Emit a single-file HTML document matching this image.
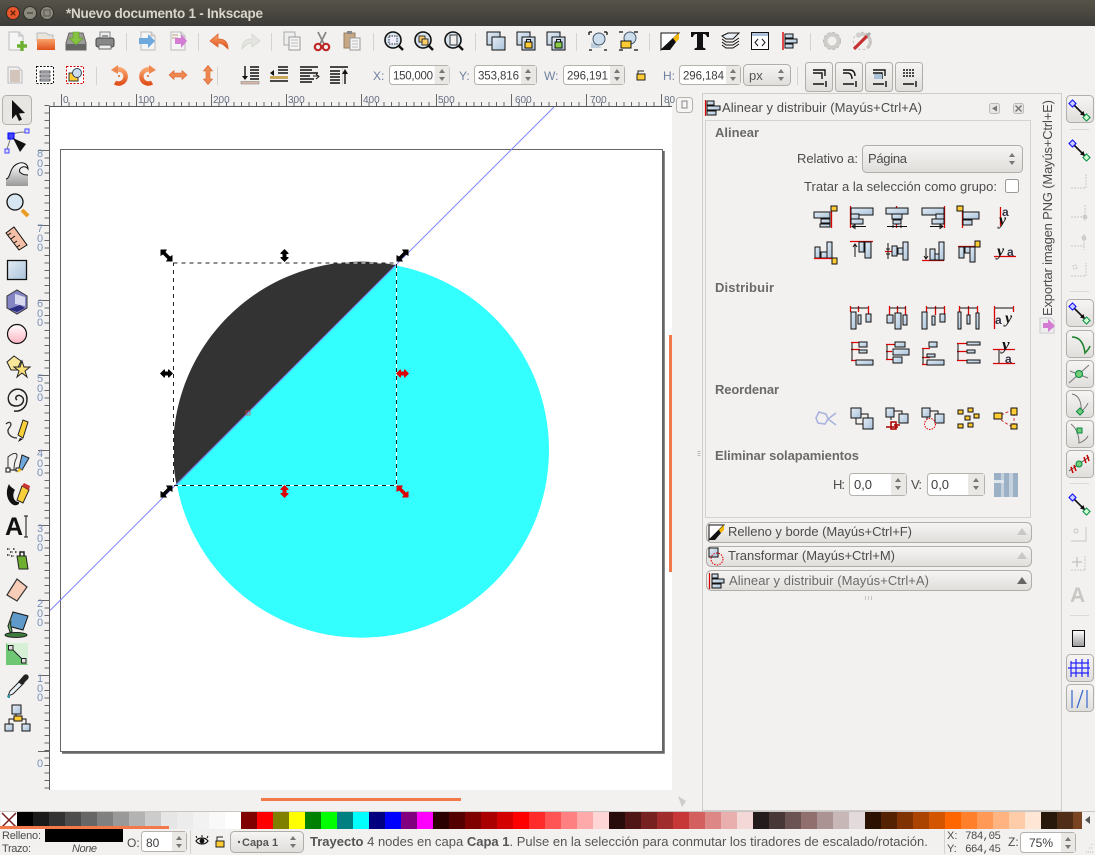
<!DOCTYPE html>
<html><head><meta charset="utf-8"><title>Inkscape</title>
<style>
html,body{margin:0;padding:0;background:#f2f1f0;width:1095px;height:855px;overflow:hidden}
svg{display:block}
text{font-family:"Liberation Sans",sans-serif;font-size:13px;fill:#4c4c4c}
.b{fill:url(#bl);stroke:#111;stroke-width:1}
.r{stroke:#d00;stroke-width:1.3;fill:none}
.k{stroke:#111;stroke-width:1;fill:none}
.y{fill:#fc3;stroke:#111;stroke-width:1}
.box{fill:#fff;stroke:#b5b2ad;stroke-width:1}
.sep{stroke:#d5d3cf;stroke-width:1}
.lab{fill:#6a6a6a;font-weight:bold}
.rl{font-size:11px;fill:#7a90b8}
.tb{font-size:10px;fill:#666f80}
.btn{fill:url(#btn);stroke:#b0aea9;stroke-width:1}
.num{fill:#3c3c3c;font-size:11.5px}
</style></head><body>
<svg width="1095" height="855" viewBox="0 0 1095 855" xmlns="http://www.w3.org/2000/svg">
<defs>
<linearGradient id="title" x1="0" y1="0" x2="0" y2="1"><stop offset="0" stop-color="#575349"/><stop offset="1" stop-color="#3c3b37"/></linearGradient>
<linearGradient id="bl" x1="0" y1="0" x2="1" y2="1"><stop offset="0" stop-color="#e4edf5"/><stop offset="1" stop-color="#a9c2da"/></linearGradient>
<linearGradient id="btn" x1="0" y1="0" x2="0" y2="1"><stop offset="0" stop-color="#f6f5f4"/><stop offset="1" stop-color="#e0dedb"/></linearGradient>
<linearGradient id="or" x1="0" y1="0" x2="0" y2="1"><stop offset="0" stop-color="#f9a36b"/><stop offset="1" stop-color="#e0521c"/></linearGradient>
<linearGradient id="gry" x1="0" y1="0" x2="0" y2="1"><stop offset="0" stop-color="#fff"/><stop offset="1" stop-color="#999"/></linearGradient>
<linearGradient id="pink" x1="0" y1="0" x2="0" y2="1"><stop offset="0" stop-color="#fff"/><stop offset="1" stop-color="#ffb3c0"/></linearGradient>
<g id="spin"><path d="M-3 -2 L0 -6 L3 -2Z M-3 2 L0 6 L3 2Z" fill="#777"/></g>
<g id="h"><path d="M0 -6.500 L4 -2.500 V-1.500 H2 V1.500 H4 V2.500 L0 6.500 L-4 2.500 V1.500 H-2 V-1.500 H-4 V-2.500Z"/></g>
<g id="dg"><path d="M-6 -6 H0.500 L-1 -3.500 L3.500 1 L6 -0.500 V6 H-0.500 L1 3.500 L-3.500 -1 L-6 0.500Z"/></g>
<g id="ndtool"><path d="M-6 -6 L6 6" stroke="#111" stroke-width="1.600" fill="none"/><path d="M6 6 L1 4.500 L4.500 1Z" fill="#111"/><rect x="-9" y="-9" width="5" height="5" fill="#ccf" stroke="#00f" transform="rotate(45 -6.500 -6.500)"/><rect x="5" y="5" width="5" height="5" fill="#cfc" stroke="#084" transform="rotate(45 7.500 7.500)"/></g>
<g id="zm"><circle cx="-1" cy="-1" r="8" fill="#d8e6f2" stroke="#111" stroke-width="1.600"/><path d="M5 5 L9 9" stroke="#111" stroke-width="2.400"/></g>
<g id="docb"><path d="M-7 -9 H3 L7 -5 V9 H-7Z" fill="#f5f5f5" stroke="#bbb"/><path d="M3 -9 V-5 H7" fill="#ddd" stroke="#bbb"/></g>
</defs>

<!-- title bar -->
<rect width="1095" height="26" fill="url(#title)"/>
<circle cx="13" cy="13" r="6.500" fill="#e9582c" stroke="#3a2a22"/>
<path d="M10.700 10.700 L15.300 15.300 M15.300 10.700 L10.700 15.300" stroke="#5a1c08" stroke-width="1.200"/>
<circle cx="30" cy="13" r="6.500" fill="#8c897f" stroke="#34322c"/><path d="M27 13H33" stroke="#4a4840" stroke-width="1.400"/>
<circle cx="47" cy="13" r="6.500" fill="#8c897f" stroke="#34322c"/><rect x="44" y="10" width="6" height="6" fill="none" stroke="#5a584f"/>
<text x="66" y="18" style="font-size:13.500px;font-weight:bold;fill:#d9d5ca" textLength="197">*Nuevo documento 1 - Inkscape</text>

<!-- toolbar seps -->
<g class="sep">
<path d="M126.500 33V51M198.500 33V51M271.500 33V51M373.500 33V51M475.500 33V51M576.500 33V51M649.500 33V51M810.500 33V51M96.500 67V85M217.500 67V85M342.500 67V85M797.500 67V85"/>
</g>

<!-- row 1 icons -->
<g transform="translate(16,41)"><use href="#docb"/><path d="M1 5H11M6 0V10" stroke="#6cb030" stroke-width="3.400"/></g>
<g transform="translate(46,41)"><path d="M-9 -8 H0 L3 -6 H7 V0 H-9Z" fill="#e8e4dc" stroke="#bbb"/><rect x="-9" y="-2" width="18" height="11" fill="url(#or)"/></g>
<g transform="translate(76,41)"><path d="M-10 2 L-7 -8 H7 L10 2 V9 H-10Z" fill="#9a9a96" stroke="#666"/><rect x="-10" y="3" width="20" height="6" fill="#666"/><path d="M-3 -9H3V-3H7L0 4L-7 -3H-3Z" fill="#85c440" stroke="#5f9a28" stroke-width=".6"/></g>
<g transform="translate(105,41)"><rect x="-5" y="-9" width="10" height="8" fill="#eee" stroke="#888"/><rect x="-9" y="-3" width="18" height="9" rx="2" fill="#888" stroke="#444"/><rect x="-6" y="4" width="12" height="4" fill="#eee" stroke="#666"/><path d="M-3 -5H3" stroke="#999" stroke-width="2"/></g>
<g transform="translate(148,41)"><use href="#docb"/><path d="M-9 -3H0V-7L7 0L0 7V3H-9Z" fill="#6fa8dc"/></g>
<g transform="translate(178,41)"><use href="#docb"/><path d="M-6 -6H0M-6 -3H0" stroke="#d4b8a8" stroke-width="1.600"/><path d="M-3 -3H3V-7L9 0L3 7V3H-3Z" fill="#d47cd4"/></g>
<g transform="translate(220,41)"><path d="M8 8 C8 0 4 -2 -2 -2 V-7 L-10 0 L-2 6 V2 C2 2 4 4 8 8Z" fill="url(#or)" stroke="#d8622a" stroke-width=".8"/></g>
<g transform="translate(250,41)"><path d="M-8 8 C-8 0 -4 -2 2 -2 V-7 L10 0 L2 6 V2 C-2 2 -4 4 -8 8Z" fill="#e4e4e0" stroke="#d4d4d0" stroke-width=".8"/></g>
<g transform="translate(292,41)"><rect x="-8" y="-9" width="11" height="13" fill="#eee" stroke="#aaa"/><rect x="-3" y="-4" width="11" height="13" fill="#f4f4f4" stroke="#999"/><path d="M-1 -1H6M-1 2H6M-1 5H6" stroke="#bbb"/></g>
<g transform="translate(322,41)"><path d="M-4 -9 L2 3 M4 -9 L-2 3" stroke="#888" stroke-width="1.800"/><circle cx="-4" cy="6" r="3.200" fill="none" stroke="#c02828" stroke-width="2.200"/><circle cx="4" cy="6" r="3.200" fill="none" stroke="#c02828" stroke-width="2.200"/></g>
<g transform="translate(352,41)"><rect x="-8" y="-8" width="11" height="15" fill="#c6a884" stroke="#96805f"/><rect x="-5" y="-10" width="5" height="3" fill="#888"/><rect x="-2" y="-3" width="10" height="12" fill="#f4f4f4" stroke="#999"/><path d="M0 0H6M0 3H6M0 6H6" stroke="#bbb"/></g>
<g transform="translate(394,41)"><use href="#zm"/><rect x="-5" y="-5" width="8" height="8" fill="#eef" stroke="#333" stroke-dasharray="1.500 1"/></g>
<g transform="translate(424,41)"><use href="#zm"/><rect x="-5" y="-5" width="6" height="6" fill="#fc6" stroke="#333"/><rect x="-2" y="-2" width="6" height="6" fill="#fc6" stroke="#333"/></g>
<g transform="translate(454,41)"><use href="#zm"/><rect x="-4" y="-6" width="7" height="10" fill="#eee" stroke="#333"/></g>
<g transform="translate(496,41)"><rect x="-9" y="-9" width="13" height="13" class="b"/><rect x="-4" y="-4" width="13" height="13" class="b"/></g>
<g transform="translate(526,41)"><rect x="-9" y="-9" width="13" height="13" class="b"/><rect x="-4" y="-4" width="13" height="13" class="b"/><rect x="-1" y="1" width="7" height="6" fill="#fc3" stroke="#111"/><path d="M0.500 1V-1.500H4.500V1" fill="none" stroke="#111"/></g>
<g transform="translate(556,41)"><rect x="-9" y="-9" width="13" height="13" class="b"/><rect x="-4" y="-4" width="13" height="13" class="b"/><rect x="-1" y="1" width="7" height="6" fill="#8c4" stroke="#111"/><path d="M0.500 1V-1.500H4.500V1" fill="none" stroke="#111"/></g>
<g transform="translate(598,41)"><path d="M-7 7H4L-7 1Z" fill="#bcd"/><circle cx="1" cy="-2" r="6" fill="#cde" stroke="#456"/><path d="M-9 -9H-6M-9 -9V-6M6 -9H9M9 -9V-6M-9 9H-6M6 9H9" stroke="#111" stroke-width="1.300" fill="none"/></g>
<g transform="translate(628,41)"><circle cx="2" cy="-3" r="6" fill="#cde" stroke="#456"/><rect x="-7" y="0" width="10" height="7" fill="#fc3" stroke="#111"/><path d="M-9 -9H-5M6 -9H10M-9 9H-5M6 9H10" stroke="#111" stroke-width="1.300"/></g>
<g transform="translate(670,41)"><path d="M-9 -8 H9 L-9 9Z" fill="#fff" stroke="#111"/><path d="M-9 9 L3 -3 L6 1 L0 9Z" fill="#111"/><path d="M3 -3 L9 -8 L9 -2 L6 1Z" fill="#f5b800"/></g>
<g transform="translate(700,41)"><path d="M-9 -9H9V-4H7C6.500 -6.500 5 -7 3 -7V6.500L5.500 7.500V9H-5.500V7.500L-3 6.500V-7C-5 -7 -6.500 -6.500 -7 -4H-9Z" fill="#111"/></g>
<g transform="translate(730,41)" fill="#e8eef4" stroke="#111"><path d="M-8 -5 L-2 -8 H9 L3 -2 H-4Z"/><path d="M-8 -2 L-4 1 H3 L9 -3" fill="none"/><path d="M-8 1 L-4 4 H3 L9 0" fill="none"/><path d="M-8 4 L-4 7 H3 L9 3" fill="none"/></g>
<g transform="translate(760,41)"><rect x="-8.500" y="-8.500" width="17" height="17" fill="#fff" stroke="#111"/><rect x="-8" y="-8" width="16" height="3" fill="#a9c2da"/><path d="M-2 -2 L-5 1.500 L-2 5 M2 -2 L5 1.500 L2 5" fill="none" stroke="#111"/></g>
<g transform="translate(790,41)"><path d="M-7 -9V9" stroke="#d00" stroke-width="1.400"/><rect x="-5" y="-7" width="8" height="4" class="b"/><rect x="-5" y="-2" width="12" height="4" class="b"/><rect x="-5" y="3" width="8" height="4" class="b"/></g>
<g transform="translate(832,41)"><circle r="6.500" fill="none" stroke="#cfcdc9" stroke-width="4"/><circle r="8.500" fill="none" stroke="#bbb" stroke-width="1" stroke-dasharray="3 2"/></g>
<g transform="translate(862,41)"><path d="M-5 -4A7.500 7.500 0 1 1 5 7" fill="none" stroke="#cfcdc9" stroke-width="3.500"/><circle r="8.800" fill="none" stroke="#bbb" stroke-width=".8" stroke-dasharray="3 2"/><path d="M-8 8 L5 -5" stroke="#c83030" stroke-width="3.200"/><path d="M5 -5 L8 -8" stroke="#aaa" stroke-width="3"/></g>

<!-- row 2 icons -->
<g transform="translate(15,75)"><path d="M-7 -8H3L7 -4V8H-7Z" fill="#eee" stroke="#bbb"/><path d="M-5 -4H5M-5 -2H5M-5 0H5M-5 2H5M-5 4H5M-5 6H5" stroke="#b89c8a"/></g>
<g transform="translate(45,75)"><rect x="-8.500" y="-8.500" width="17" height="17" fill="#fff" stroke="#111" stroke-dasharray="2 1.500"/><path d="M-5 -4H5V-2H-5ZM-5 0H5V2H-5ZM-5 4H5V6H-5Z" fill="#dde" stroke="#222" stroke-width=".7"/></g>
<g transform="translate(75,75)"><rect x="-8.500" y="-8.500" width="17" height="17" fill="#fff" stroke="#d00" stroke-dasharray="2 1.500"/><rect x="-6" y="-2" width="9" height="8" fill="#fc3" stroke="#333"/><circle cx="2" cy="-2" r="4.500" fill="#cde" stroke="#345"/></g>
<g transform="translate(119,75)" fill="none" stroke="url(#or)" stroke-width="4.500"><path d="M-3 -5 A7 7 0 1 1 -4 7.500"/></g>
<path transform="translate(119,75)" d="M-8 -5 L-1 -10 L-1 -1Z" fill="#ee8850"/>
<circle cx="119" cy="76" r="1" fill="#d8622a"/>
<g transform="translate(148,75)" fill="none" stroke="url(#or)" stroke-width="4.500"><path d="M3 -5 A7 7 0 1 0 4 7.500"/></g>
<path transform="translate(148,75)" d="M8 -5 L1 -10 L1 -1Z" fill="#ee8850"/>
<circle cx="148" cy="76" r="1" fill="#d8622a"/>
<path transform="translate(178,75)" d="M-9 0L-4 -4.500V-2H4V-4.500L9 0L4 4.500V2H-4V4.500Z" fill="#ee8850" stroke="#d8622a" stroke-width=".6"/>
<path transform="translate(208,75)" d="M0 -9.500L4.500 -4H2V4H4.500L0 9.500L-4.500 4H-2V-4H-4.500Z" fill="#ee8850" stroke="#d8622a" stroke-width=".6"/>
<g transform="translate(250,75)"><path d="M0 -8H9M0 -5H9M0 -2H9M0 1H9M0 4H9" stroke="#111" stroke-width="1.600"/><path d="M-5 -9V3" stroke="#111" stroke-width="1.400"/><path d="M-8 1H-2L-5 5Z" fill="#111"/><rect x="-9" y="6.500" width="18" height="2.500" fill="#dba" stroke="#777" stroke-width=".5"/></g>
<g transform="translate(279,75)"><path d="M-1 -8H9M-1 -5H9M-1 -2H9M-9 6H9" stroke="#111" stroke-width="1.600"/><path d="M-9 -2L-5 -5V1Z" fill="#111"/><rect x="-9" y="1" width="18" height="3" fill="#c9a85c"/></g>
<g transform="translate(309,75)"><path d="M-9 -8H9M-9 -5H3M-9 -2H9M-9 1H1M-9 4H5M-9 7H3" stroke="#111" stroke-width="1.500"/><path d="M4 1H9M7 -1L10 1.500L7 4" stroke="#111" fill="none"/></g>
<g transform="translate(339,75)"><path d="M-9 -8H9" stroke="#111" stroke-width="1.500"/><path d="M-9 -4H1M-9 -1H1M-9 2H1M-9 5H1M-9 8H1" stroke="#111" stroke-width="1.600"/><path d="M6 9V-3" stroke="#111" stroke-width="1.400"/><path d="M3 -1L6 -6L9 -1Z" fill="#111"/></g>

<!-- coords -->
<text x="373" y="80" style="fill:#6f80a0;font-size:12px">X:</text>
<rect x="389.500" y="65.500" width="60" height="19" rx="3" class="box"/>
<rect x="434.500" y="66" width="15" height="18" fill="#eae8e5"/>
<text x="393" y="79.500" class="num" textLength="40">150,000</text>
<use href="#spin" x="442" y="75"/>
<text x="459" y="80" style="fill:#6f80a0;font-size:12px">Y:</text>
<rect x="474.500" y="65.500" width="62" height="19" rx="3" class="box"/>
<rect x="521" y="66" width="15" height="18" fill="#eae8e5"/>
<text x="478" y="79.500" class="num" textLength="41">353,816</text>
<use href="#spin" x="528" y="75"/>
<text x="544" y="80" style="fill:#6f80a0;font-size:12px">W:</text>
<rect x="563.500" y="65.500" width="61" height="19" rx="3" class="box"/>
<rect x="610" y="66" width="14" height="18" fill="#eae8e5"/>
<text x="567" y="79.500" class="num" textLength="41">296,191</text>
<use href="#spin" x="617" y="75"/>
<g transform="translate(641,75)"><rect x="-4" y="-1" width="8" height="6" fill="#fc3" stroke="#222"/><path d="M-3 -1V-4H3" fill="none" stroke="#222"/></g>
<text x="663" y="80" style="fill:#6f80a0;font-size:12px">H:</text>
<rect x="679.500" y="65.500" width="61" height="19" rx="3" class="box"/>
<rect x="726" y="66" width="14" height="18" fill="#eae8e5"/>
<text x="683" y="79.500" class="num" textLength="41">296,184</text>
<use href="#spin" x="733" y="75"/>
<rect x="743.500" y="64.500" width="47" height="21" rx="4" class="btn"/><text x="749" y="80" style="fill:#555">px</text><use href="#spin" x="781" y="75"/>
<g class="btn">
<rect x="805.500" y="62.500" width="27" height="29" rx="3"/><rect x="835.500" y="62.500" width="27" height="29" rx="3"/><rect x="865.500" y="62.500" width="27" height="29" rx="3"/><rect x="895.500" y="62.500" width="27" height="29" rx="3"/>
</g>
<g fill="none" stroke="#111" stroke-width="1.400">
<path d="M813 70H825V76M813 73H822V79"/><path d="M813 84H824M826 81V87"/>
<path d="M843 70H850C853 70 855 72 855 76M843 73H848C850 73 852 75 852 79"/><path d="M843 84H854M856 81V87"/>
<path d="M873 70H885V76M873 73H882V79"/><path d="M873 84H884M886 81V87"/>
<path d="M903 70H915M903 73H915M903 76H915" stroke-dasharray="2 1"/><path d="M903 84H914M916 81V87"/>
</g>
<rect x="874" y="74" width="8" height="5" fill="#a9c2da"/>

<!-- rulers -->
<rect x="37" y="93" width="635" height="13" fill="#f2f1f0"/>
<rect x="37" y="106" width="13" height="684" fill="#f2f1f0"/>
<line x1="50" y1="106.500" x2="672" y2="106.500" stroke="#555"/>
<line x1="49.500" y1="106" x2="49.500" y2="790" stroke="#555"/>
<line x1="53.500" y1="104" x2="672" y2="104" stroke="#666" stroke-width="4" stroke-dasharray="1 6.500"/>
<line x1="47" y1="105" x2="47" y2="790" stroke="#666" stroke-width="5" stroke-dasharray="1 6.500"/>
<path d="M61.500 94V106M136.500 94V106M211.500 94V106M286.500 94V106M361.500 94V106M436.500 94V106M511.500 94V106M586.500 94V106M661.500 94V106" stroke="#666"/>
<path d="M38 150.500H50M38 225.500H50M38 300.500H50M38 375.500H50M38 450.500H50M38 525.500H50M38 600.500H50M38 675.500H50M38 751.500H50" stroke="#666"/>
<g>
<text x="63" y="103" class="tb">0</text><text x="138" y="103" class="tb">100</text><text x="213" y="103" class="tb">200</text><text x="288" y="103" class="tb">300</text><text x="363" y="103" class="tb">400</text><text x="438" y="103" class="tb">500</text><text x="515" y="103" class="tb">600</text><text x="590" y="103" class="tb">700</text><text x="664" y="103" class="tb">80</text>
</g>
<g>
<text x="37" y="157" class="rl">8</text><text x="37" y="167" class="rl">0</text><text x="37" y="176" class="rl">0</text>
<text x="37" y="232" class="rl">7</text><text x="37" y="242" class="rl">0</text><text x="37" y="251" class="rl">0</text>
<text x="37" y="307" class="rl">6</text><text x="37" y="317" class="rl">0</text><text x="37" y="326" class="rl">0</text>
<text x="37" y="382" class="rl">5</text><text x="37" y="392" class="rl">0</text><text x="37" y="401" class="rl">0</text>
<text x="37" y="457" class="rl">4</text><text x="37" y="467" class="rl">0</text><text x="37" y="476" class="rl">0</text>
<text x="37" y="532" class="rl">3</text><text x="37" y="542" class="rl">0</text><text x="37" y="551" class="rl">0</text>
<text x="37" y="607" class="rl">2</text><text x="37" y="617" class="rl">0</text><text x="37" y="626" class="rl">0</text>
<text x="37" y="682" class="rl">1</text><text x="37" y="692" class="rl">0</text><text x="37" y="701" class="rl">0</text>
<text x="37" y="767" class="rl">0</text>
</g>

<!-- canvas -->
<rect x="50" y="107" width="622" height="683" fill="#fff"/>
<rect x="60.500" y="149.500" width="602" height="602" fill="#fff" stroke="#666"/>
<path d="M663.500 151V752.500H62" fill="none" stroke="#666" stroke-width="2.500"/>
<circle cx="361.300" cy="450" r="187.700" fill="#33ffff"/>
<path d="M176.500 485 A187.700 187.700 0 0 1 396 265 Z" fill="#333"/>
<line x1="50" y1="610.500" x2="554" y2="107" stroke="#8080ff" stroke-width="1"/>
<rect x="173.500" y="263" width="223" height="222.500" fill="none" stroke="#fff"/>
<rect x="173.500" y="263" width="223" height="222.500" fill="none" stroke="#222" stroke-dasharray="4 4"/>
<rect x="246" y="411" width="4" height="4" fill="none" stroke="#d44" stroke-width=".7"/>
<use href="#dg" x="166.500" y="255.500"/>
<use href="#dg" transform="translate(402.500,255.500) rotate(90)"/>
<use href="#dg" transform="translate(166.500,491.500) rotate(90)"/>
<use href="#dg" x="402.500" y="491.500" fill="#d00"/>
<use href="#h" x="284.500" y="255.500"/>
<use href="#h" x="284.500" y="491.500" fill="#d00"/>
<use href="#h" transform="translate(166.500,373.500) rotate(90)"/>
<use href="#h" transform="translate(402.500,373.500) rotate(90)" fill="#d00"/>

<!-- scrollbars -->
<rect x="669" y="335" width="3" height="237" fill="#f4794a"/>
<rect x="261" y="798" width="200" height="3" fill="#f4794a"/>
<rect x="676.500" y="97.500" width="16" height="15" rx="3" fill="#f6f5f4" stroke="#b5b2ad"/>
<path d="M682 101H687V108H682Z" fill="none" stroke="#888"/>
<path d="M678 796L686 801L682 807Z" fill="#ccc"/><path d="M699 451V457" stroke="#bbb" stroke-dasharray="1 1" stroke-width="3"/>

<!-- left toolbar -->
<rect x="2.500" y="95.500" width="29" height="29" rx="4" fill="#e8e6e3" stroke="#b5b2ad"/>
<path d="M12 100V119L16 114.500L19 121L22 119.500L19 113.500L25 113Z" fill="#111"/>
<g transform="translate(17,141)"><path d="M-6 -4C-4 -8 1 -9 9 -9" fill="none" stroke="#777"/><path d="M-6 -4L-10 8" stroke="#777" fill="none"/><rect x="-9" y="-8" width="6" height="6" fill="#44f" stroke="#00f"/><rect x="8" y="-12" width="4" height="4" fill="#ddf" stroke="#44f"/><rect x="-12" y="8" width="4" height="4" fill="#ddf" stroke="#44f"/><path d="M-4 -3L9 3L3 11Z" fill="#111"/></g>
<g transform="translate(17,173)"><path d="M-11 13V6C-6 5 -8 -5 0 -9C6 -12 11 -9 11 -4C9 -7 5 -7 3 -4C1 -1 5 2 11 2V13Z" fill="url(#gry)"/><path d="M-11 6C-6 5 -8 -5 0 -9C6 -12 11 -9 11 -4C9 -7 5 -7 3 -4C1 -1 5 2 11 2" fill="none" stroke="#111"/></g>
<g transform="translate(17,205)"><circle cx="-2" cy="-3" r="8" fill="#d8e6f2" stroke="#111" stroke-width="1.300"/><path d="M5 5L11 11" stroke="#e99b22" stroke-width="4"/></g>
<g transform="translate(17,238)"><path d="M-11 -5L-3 -11L10 7L2 12Z" fill="#f4bfa6" stroke="#111"/><path d="M-9 -3L-6 -5M-6 1L-2 -2M-3 5L0 3M0 9L3 7" stroke="#111"/></g>
<rect x="7.500" y="260.500" width="19" height="19" fill="url(#bl)" stroke="#111" stroke-width="1.300"/>
<g transform="translate(17,302)"><path d="M-10 -6L0 -12L10 -6V6L0 12L-10 6Z" fill="#8585c5" stroke="#333"/><path d="M-2 -8L8 -5V4L-2 2Z" fill="#d8d8ee"/><path d="M-8 7L3 3L8 6L0 10Z" fill="#2c2c80"/></g>
<circle cx="17" cy="334" r="9.500" fill="url(#pink)" stroke="#111" stroke-width="1.200"/>
<g transform="translate(17,366)"><path d="M-10 -4L-3 -10L4 -5L0 4L-6 4Z" fill="#f9e89a" stroke="#222"/><path d="M5 -5L7 1L13 1L8 5L10 11L5 7L0 11L2 5L-3 1L3 1Z" fill="#f9e07a" stroke="#222"/></g>
<path d="M17 400C14 398 17 394 21 396C26 399 23 406 16 406C8 406 6 397 11 392C17 386 27 390 27 399C27 408 20 412 14 411" fill="none" stroke="#222" stroke-width="1.500"/>
<g transform="translate(17,430)"><path d="M-11 -6C-7 -10 -4 -6 -8 -2C-11 2 -7 8 0 8" fill="none" stroke="#333" stroke-width="1.300"/><path d="M1 5L6 -10L11 -8L6 8Z" fill="#f9d03a" stroke="#222"/><path d="M3 8L1 12L6 9Z" fill="#111"/></g>
<g transform="translate(17,462)"><path d="M-9 8L-9 -5C-2 -11 2 -9 -1 -3C-3 1 -3 5 -3 8" fill="none" stroke="#333"/><rect x="-11" y="6" width="4" height="4" fill="#fff" stroke="#111"/><rect x="-1" y="6" width="3" height="3" fill="#fff" stroke="#111"/><path d="M-7 8H-1" stroke="#111"/><path d="M2 6L5 -7L12 -4L5 8Z" fill="#6fa8dc" stroke="#222"/><path d="M2 6L0 11L5 8Z" fill="#f5c518"/></g>
<g transform="translate(17,494)"><path d="M-8 -10C-12 -2 -10 6 -5 10C-1 13 3 10 2 8C-4 8 -5 0 -2 -4C-4 -6 -7 -7 -8 -10Z" fill="#111"/><path d="M0 6L5 -8L12 -4L6 9Z" fill="#f9d03a" stroke="#222"/><path d="M5 -8L7 -11L13 -8L12 -4Z" fill="#c33"/></g>
<text x="5" y="535" style="font-size:25px;font-weight:bold;fill:#111">A</text>
<path d="M26 516V537M24 516H28M24 537H28" stroke="#111"/>
<g transform="translate(17,558)"><path d="M0 -2H9L11 11H2Z" fill="#70b030" stroke="#222"/><path d="M3 -2V-6H7V-2" fill="none" stroke="#222" stroke-width="1.500"/><path d="M-10 -9H-7M-7 -6H-4M-10 -3H-7M-4 -9H-2M-2 -6H0M-6 -2H-3" stroke="#222" stroke-width="1.600" stroke-dasharray="1.500 1"/></g>
<path d="M7 595L17 579L27 587L17 601Z" fill="#f8cdb8" stroke="#333" stroke-width="1.200"/>
<g transform="translate(17,622)"><path d="M-4 -10L11 -6L6 8L-9 4Z" fill="#5f99c9" stroke="#111"/><path d="M-4 -10L-9 4L-7 10C-2 11 -8 5 -6 -1" fill="#6a6" stroke="#222"/><ellipse cx="-1" cy="13" rx="11" ry="2.500" fill="#3c7c3c" stroke="#222"/></g>
<rect x="6" y="643" width="22" height="22" fill="#5fc265" opacity=".9"/><path d="M6 643H28V665Z" fill="#d6f0d6"/>
<path d="M11 648L23 660" stroke="#222"/><rect x="8.500" y="645.500" width="4.500" height="4.500" fill="#ddd" stroke="#222"/><rect x="21.500" y="658.500" width="4.500" height="4.500" fill="#ddd" stroke="#222"/>
<g transform="translate(17,686)"><path d="M-9 10L-7 5L4 -6L7 -3L-4 8Z" fill="#e8f0f6" stroke="#222"/><path d="M1 -4L7 -11C10 -13 13 -10 11 -7L5 -1Z" fill="#222"/><path d="M-10 10L-9 12L-7 12L-7 8Z" fill="#39a"/></g>
<g transform="translate(17,718)"><rect x="-5" y="-13" width="9" height="9" class="b"/><rect x="-12" y="6" width="8" height="7" class="b"/><rect x="5" y="6" width="8" height="7" class="b"/><rect x="-3" y="-2" width="8" height="5" class="y"/><path d="M-1 -4V-2M-8 6V1H-3M9 6V1H5" fill="none" stroke="#111"/></g>

<!-- dock -->
<rect x="702.500" y="93.500" width="359" height="717" fill="none" stroke="#cfcdc9"/>
<g transform="translate(713,108)"><path d="M-7.500 -8V8" stroke="#d00" stroke-width="1.200"/><rect x="-6" y="-7" width="7" height="4" class="b"/><rect x="-6" y="-2" width="13" height="4" class="b"/><rect x="-6" y="3" width="9" height="4" class="b"/></g>
<text x="722" y="112" textLength="200">Alinear y distribuir (Mayús+Ctrl+A)</text>
<rect x="989.500" y="103.500" width="10" height="10" rx="2" fill="#e8e6e3" stroke="#bbb"/><path d="M997 105.500V111.500L992 108.500Z" fill="#777"/>
<rect x="1013.500" y="103.500" width="10" height="10" rx="2" fill="#e8e6e3" stroke="#bbb"/><path d="M1015.500 105.500L1021.500 111.500M1021.500 105.500L1015.500 111.500" stroke="#777" stroke-width="1.500"/>
<rect x="705.500" y="120.500" width="325" height="397" fill="none" stroke="#d5d3cf"/>
<text x="715" y="137" class="lab" textLength="44">Alinear</text>
<text x="797" y="163" textLength="61">Relativo a:</text>
<rect x="862.500" y="145.500" width="160" height="27" rx="4" class="btn"/>
<text x="868" y="163" textLength="39">Página</text><use href="#spin" x="1012" y="159"/>
<text x="804" y="191" textLength="193">Tratar a la selección como grupo:</text>
<rect x="1005.500" y="179.500" width="13" height="13" rx="2" fill="#fff" stroke="#999"/>

<!-- align row1 -->
<g>
<g transform="translate(826,217)"><rect x="-12" y="-5" width="16" height="6" class="b"/><rect x="-5" y="2" width="9" height="4" class="b"/><rect x="-6" y="7" width="10" height="3" class="b"/><path d="M5.500 -11V11" class="r"/><rect x="5" y="-11" width="6" height="5" class="y"/></g>
<g transform="translate(862,217)"><path d="M-11.500 -11V11" class="r"/><rect x="-11" y="-9" width="22" height="7" class="b"/><rect x="-11" y="-3" width="8" height="5" class="b"/><rect x="-11" y="2" width="12" height="5" class="b"/><path d="M-10 9.500H4M-10 9.500L-7 7.500V11.500Z" class="k"/></g>
<g transform="translate(897,217)"><path d="M-0.500 -11V11" class="r"/><rect x="-11" y="-9" width="22" height="6" class="b"/><rect x="-5" y="-3" width="10" height="5" class="b"/><rect x="-4" y="3" width="8" height="4" class="b"/><path d="M-10 9.500H10M-4 8V11M4 8V11" class="k"/></g>
<g transform="translate(933,217)"><path d="M11.500 -11V11" class="r"/><rect x="-11" y="-9" width="22" height="7" class="b"/><rect x="3" y="-3" width="8" height="5" class="b"/><rect x="-1" y="2" width="12" height="5" class="b"/><path d="M-3 9.500H10M10 9.500L7 7.500V11.500Z" class="k"/></g>
<g transform="translate(969,217)"><path d="M-6.500 -11V11" class="r"/><rect x="-12" y="-11" width="6" height="5" class="y"/><rect x="-6" y="-5" width="16" height="7" class="b"/><rect x="-6" y="3" width="9" height="5" class="b"/></g>
<g transform="translate(1005,217)"><path d="M-4.500 -10V9" class="r"/><text x="-3" y="-1" style="font-size:12px;font-weight:bold;fill:#334">a</text><text x="-6" y="8" style="font-family:'Liberation Serif',serif;font-size:16px;font-weight:bold;font-style:italic;fill:#111">y</text></g>
<!-- align row2 -->
<g transform="translate(826,251)"><rect x="-11" y="-4" width="5" height="11" class="b"/><rect x="-5" y="1" width="6" height="6" class="b"/><rect x="1" y="-9" width="5" height="16" class="b"/><path d="M-12 7.500H8" class="r"/><rect x="6" y="7" width="5" height="6" class="y"/></g>
<g transform="translate(862,251)"><path d="M-12 -9.500H11" class="r"/><rect x="-3" y="-9" width="5" height="10" class="b"/><rect x="3" y="-9" width="6" height="16" class="b"/><path d="M-7 -6V6M-9 -4L-7 -7L-5 -4" class="k"/></g>
<g transform="translate(897,251)"><path d="M-12 0.500H11" class="r"/><rect x="-5" y="-5" width="5" height="10" class="b"/><rect x="1" y="-3" width="5" height="6" class="b"/><rect x="6" y="-9" width="5" height="18" class="b"/><path d="M-9 -8V8M-11 -2H-7M-11 3H-7" class="k"/></g>
<g transform="translate(933,251)"><path d="M-11 9.500H11" class="r"/><rect x="-3" y="-2" width="5" height="11" class="b"/><rect x="2" y="3" width="4" height="6" class="b"/><rect x="6" y="-9" width="5" height="18" class="b"/><path d="M-7 -3V8M-9 5L-7 8L-5 5" class="k"/></g>
<g transform="translate(969,251)"><path d="M-11 -4.500H6" class="r"/><rect x="-10" y="-4" width="5" height="11" class="b"/><rect x="-4" y="-4" width="5" height="6" class="b"/><rect x="1" y="-4" width="5" height="15" class="b"/><rect x="6" y="-10" width="5" height="6" class="y"/></g>
<g transform="translate(1005,251)"><path d="M-11 5.500H11" class="r"/><text x="-8" y="5" style="font-family:'Liberation Serif',serif;font-size:16px;font-weight:bold;font-style:italic;fill:#111">y</text><text x="2" y="5" style="font-size:12px;font-weight:bold;fill:#334">a</text></g>
</g>

<text x="715" y="292" class="lab" textLength="59">Distribuir</text>
<!-- distribute -->
<g>
<g transform="translate(862,317)"><path d="M-11.500 -11V-5M-3.500 -11V-5M6.500 -11V-2" class="r"/><path d="M-11 -9H6" class="k"/><rect x="-11" y="-5" width="5" height="17" class="b"/><rect x="-4" y="-2" width="3" height="9" class="b"/><rect x="4" y="-3" width="5" height="8" class="b"/></g>
<g transform="translate(898,317)"><path d="M-8.500 -11V-2M-0.500 -11V-4M7.500 -11V-2" class="r"/><path d="M-8 -9H8" class="k"/><rect x="-11" y="-2" width="6" height="8" class="b"/><rect x="-3" y="-4" width="6" height="16" class="b"/><rect x="5" y="-2" width="4" height="10" class="b"/></g>
<g transform="translate(933,317)"><path d="M-6.500 -11V-5M2.500 -11V-2M11.500 -11V-3" class="r"/><path d="M-6 -9H11" class="k"/><rect x="-11" y="-5" width="5" height="17" class="b"/><rect x="-1" y="-1" width="3" height="9" class="b"/><rect x="7" y="-3" width="5" height="8" class="b"/></g>
<g transform="translate(969,317)"><path d="M-9.500 -11V-5M-0.500 -11V-2M8.500 -11V-4" class="r"/><path d="M-9 -9H8" class="k"/><rect x="-11" y="-5" width="3" height="17" class="b"/><rect x="-2" y="-2" width="3" height="9" class="b"/><rect x="7" y="-4" width="3" height="16" class="b"/></g>
<g transform="translate(1005,317)"><path d="M-10.500 -11V12M8.500 -11V-5" class="r"/><path d="M-10 -9H8" class="k"/><text x="-10" y="7" style="font-size:12px;font-weight:bold;fill:#334">a</text><text x="0" y="6" style="font-family:'Liberation Serif',serif;font-size:16px;font-weight:bold;font-style:italic;fill:#111">y</text></g>
<g transform="translate(862,353)"><path d="M-11 -10.500H-2M-11 -3.500H-2M-11 7.500H2" class="r"/><path d="M-10 -10V7" class="k"/><rect x="-3" y="-11" width="8" height="5" class="b"/><rect x="-3" y="-3" width="8" height="3" class="b"/><rect x="-6" y="7" width="17" height="5" class="b"/></g>
<g transform="translate(898,353)"><path d="M-12 -8.500H-1M-12 -1.500H-6M-12 6.500H-2" class="r"/><path d="M-11 -8V6" class="k"/><rect x="-3" y="-11" width="10" height="5" class="b"/><rect x="-5" y="-4" width="16" height="6" class="b"/><rect x="-5" y="4" width="9" height="6" class="b"/></g>
<g transform="translate(933,353)"><path d="M-11 -4.500H-3M-11 4.500H-3M-11 11.500H-3" class="r"/><path d="M-10 -4V11" class="k"/><rect x="-4" y="-11" width="8" height="5" class="b"/><rect x="-6" y="1" width="8" height="3" class="b"/><rect x="-6" y="7" width="17" height="5" class="b"/></g>
<g transform="translate(969,353)"><path d="M-12 -9.500H-2M-12 -1.500H-2M-12 7.500H-2" class="r"/><path d="M-11 -9V7" class="k"/><rect x="-2" y="-11" width="13" height="3" class="b"/><rect x="-2" y="-3" width="8" height="3" class="b"/><rect x="-2" y="7" width="13" height="3" class="b"/></g>
<g transform="translate(1005,353)"><path d="M-12 -3.500H10M-12 10.500H10" class="r"/><path d="M-6 -3V10" class="k"/><text x="-3" y="-3" style="font-family:'Liberation Serif',serif;font-size:17px;font-weight:bold;font-style:italic;fill:#111">y</text><text x="0" y="10" style="font-size:12px;font-weight:bold;fill:#334">a</text></g>
</g>

<text x="715" y="394" class="lab" textLength="64">Reordenar</text>
<g>
<g transform="translate(826,418)" fill="none" stroke="#a9b4dc" stroke-width="1.600"><path d="M-10 0L-7 -6L0 -4L2 1L-1 6L-8 5Z"/><path d="M2 1L10 -5M2 1L10 7"/></g>
<g transform="translate(862,418)"><rect x="-11" y="-10" width="10" height="10" class="b"/><rect x="1" y="0" width="10" height="11" class="b"/><path d="M-1 -4H6V0M-6 0V6H1" class="k"/></g>
<g transform="translate(897,418)"><rect x="-11" y="-10" width="8" height="9" class="b"/><rect x="2" y="-4" width="9" height="9" class="b"/><path d="M-3 -7H5V-4M-6 -1V2" class="k"/><path d="M-11 9H1M-6 4H-1V11H-6ZM-3 7H3" stroke="#a00" fill="none" stroke-width="1.500"/></g>
<g transform="translate(933,418)"><rect x="-11" y="-10" width="8" height="9" class="b"/><rect x="2" y="-4" width="9" height="9" class="b"/><path d="M-3 -7H5V-4M-6 -1V2" class="k"/><circle cx="-3" cy="6" r="5.500" fill="none" stroke="#d00" stroke-dasharray="1.500 1.200"/></g>
<g transform="translate(969,418)"><rect x="-11" y="-8" width="5" height="4" class="y"/><rect x="-1" y="-10" width="5" height="4" class="y"/><rect x="5" y="-4" width="5" height="4" class="y"/><rect x="-4" y="-2" width="5" height="4" class="y"/><rect x="-11" y="6" width="5" height="4" class="y"/><rect x="-1" y="5" width="5" height="4" class="y"/></g>
<g transform="translate(1005,418)"><path d="M-4 -3L7 -8M-4 2L7 9M9 -5V6" stroke="#d33" stroke-dasharray="3 2" fill="none"/><rect x="-11" y="-5" width="8" height="6" class="y"/><rect x="6" y="-10" width="6" height="7" class="y"/><rect x="6" y="6" width="6" height="5" class="y"/></g>
</g>

<text x="715" y="460" class="lab" textLength="144">Eliminar solapamientos</text>
<text x="833" y="489" textLength="12">H:</text>
<rect x="849.500" y="473.500" width="57" height="22" rx="3" class="box"/><text x="854" y="489" textLength="18" style="fill:#3c3c3c">0,0</text><rect x="891" y="474" width="15" height="21" fill="#eae8e5"/><use href="#spin" x="898" y="484"/>
<text x="911" y="489" textLength="11">V:</text>
<rect x="927.500" y="473.500" width="57" height="22" rx="3" class="box"/><text x="931" y="489" textLength="18" style="fill:#3c3c3c">0,0</text><rect x="968" y="474" width="16" height="21" fill="#eae8e5"/><use href="#spin" x="976" y="484"/>
<rect x="994" y="473" width="24" height="24" fill="#9db1c6"/><rect x="1001" y="473" width="3" height="24" fill="#c5d2de"/><rect x="1009" y="473" width="4" height="24" fill="#c5d2de"/><rect x="994" y="480" width="10" height="3" fill="#dfe6ec"/>

<!-- expanders -->
<rect x="706.500" y="522.500" width="325" height="20" rx="5" class="btn"/>
<rect x="706.500" y="546.500" width="325" height="20" rx="5" class="btn"/>
<rect x="706.500" y="570.500" width="325" height="20" rx="5" class="btn"/>
<g transform="translate(716,532)"><path d="M-7 -7H8L-7 8Z" fill="#fff" stroke="#111"/><path d="M-7 8L3 -2L5 1L-1 8Z" fill="#111"/><path d="M3 -2L8 -7L8 -2L5 1Z" fill="#f5b800"/></g>
<g transform="translate(716,556)"><rect x="-7" y="-8" width="9" height="9" class="b"/><circle cx="1" cy="3" r="6" fill="none" stroke="#d00" stroke-dasharray="1.500 1.200"/></g>
<g transform="translate(716,581)"><path d="M-6.500 -8V8" stroke="#d00" stroke-width="1.200"/><rect x="-4" y="-7" width="6" height="4" class="b"/><rect x="-4" y="-2" width="12" height="4" class="b"/><rect x="-4" y="3" width="9" height="4" class="b"/></g>
<text x="728" y="536" textLength="184">Relleno y borde (Mayús+Ctrl+F)</text>
<text x="728" y="560" textLength="167">Transformar (Mayús+Ctrl+M)</text>
<text x="729" y="585" textLength="200" style="fill:#6a6a6a">Alinear y distribuir (Mayús+Ctrl+A)</text>
<path d="M1017 535L1022 528L1027 535Z" fill="#c9c7c3"/><path d="M1017 559L1022 552L1027 559Z" fill="#c9c7c3"/><path d="M1017 584L1022 577L1027 584Z" fill="#666"/>
<path d="M865.500 596V600M868.500 596V600M871.500 596V600" stroke="#c5c3bf"/>

<!-- export tab -->
<text transform="translate(1052,316) rotate(-90)" textLength="216">Exportar imagen PNG (Mayús+Ctrl+E)</text>
<g transform="translate(1047,325)"><path d="M-7 -7H4L7 -4V8H-7Z" fill="#eee" stroke="#ccc"/><path d="M-4 -2H1V-6L8 1L1 7V3H-4Z" fill="#d47cd4"/></g>

<!-- snap bar -->
<line x1="1061.500" y1="93" x2="1061.500" y2="810" stroke="#cfcdc9"/>
<g class="btn">
<rect x="1066.500" y="95.500" width="27" height="27" rx="4"/>
<rect x="1066.500" y="299.500" width="27" height="27" rx="4"/>
<rect x="1066.500" y="330.500" width="27" height="27" rx="4"/>
<rect x="1066.500" y="360.500" width="27" height="27" rx="4"/>
<rect x="1066.500" y="390.500" width="27" height="27" rx="4"/>
<rect x="1066.500" y="420.500" width="27" height="27" rx="4"/>
<rect x="1066.500" y="450.500" width="27" height="27" rx="4"/>
<rect x="1066.500" y="654.500" width="27" height="27" rx="4"/>
<rect x="1066.500" y="684.500" width="27" height="27" rx="4"/>
</g>
<path d="M1070 129.500H1089M1070 291.500H1089M1070 483.500H1089M1070 615.500H1089" stroke="#dcdad6"/>
<use href="#ndtool" x="1079" y="110"/>
<use href="#ndtool" x="1079" y="150"/>
<g fill="none" stroke="#c9c7c3" stroke-dasharray="2 1">
<path d="M1071 188H1086V174"/>
<path d="M1071 217H1085M1085 205V221"/><circle cx="1085" cy="217" r="2" fill="#ccc"/>
<path d="M1071 246H1084M1084 234V250"/><circle cx="1084" cy="238" r="2" fill="#ccc"/>
<path d="M1071 276H1086V263"/><circle cx="1075" cy="267" r="2"/>
</g>
<use href="#ndtool" x="1079" y="313"/>
<path d="M1072 337C1081 337 1084 345 1085 353C1087 351 1089 349 1090 346" fill="none" stroke="#1a7f2a" stroke-width="1.500"/>
<g transform="translate(1079,374)"><path d="M-10 9L10 -9M-9 -3L9 4" stroke="#777" fill="none"/><circle r="3.500" fill="#7c7" stroke="#084"/></g>
<g transform="translate(1079,404)"><path d="M-7 -10C-1 -9 3 -3 2 8C5 5 8 2 9 -1" fill="none" stroke="#777"/><rect x="-1.500" y="5" width="5" height="5" fill="#7c7" stroke="#084" transform="rotate(45 1 7.500)"/></g>
<g transform="translate(1079,434)"><path d="M-8 -10C-3 -6 0 0 0 9C3 8 7 6 9 2" fill="none" stroke="#777"/><rect x="-2" y="-6" width="5" height="5" fill="#7c7" stroke="#084"/></g>
<g transform="translate(1079,464)"><path d="M-10 7L10 -7" stroke="#555"/><path d="M-8 3L-6 9M-5 1L-3 7M5 -7L7 -1M8 -9L10 -3" stroke="#c00" stroke-width="1.500"/><circle r="3" fill="#7c7" stroke="#084"/></g>
<use href="#ndtool" x="1079" y="504"/>
<g fill="none" stroke="#c9c7c3"><path d="M1071 541H1086V527"/><circle cx="1076" cy="531" r="2"/><path d="M1072 562H1082M1077 557V567" stroke-width="1.500"/><path d="M1071 570H1085M1085 556V570" stroke-dasharray="2 1"/></g>
<text x="1070" y="602" style="font-size:21px;font-weight:bold;fill:#c9c7c3">A</text>
<rect x="1072.500" y="630.500" width="12" height="16" fill="url(#gry)" stroke="#111"/>
<path d="M1071 661V677M1076 659V677M1082 659V677M1088 659V677M1071 663H1089M1068 668H1090M1071 673H1089" stroke="#22f" stroke-width="1.200" fill="none"/>
<path d="M1072 690V708M1087 690V708M1077 708L1083 690" stroke="#36c" stroke-width="1.200" fill="none"/>

<!-- palette -->
<rect x="0" y="811" width="1095" height="1" fill="#c9c7c3"/>
<rect x="1" y="812" width="16" height="17" fill="#fff"/><path d="M2 813L16 827M16 813L2 827" stroke="#7a1f1f" stroke-width="1.500"/>
<g>
<rect x="17" y="812" width="16" height="17" fill="#000"/><rect x="33" y="812" width="16" height="17" fill="#1a1a1a"/><rect x="49" y="812" width="16" height="17" fill="#333"/><rect x="65" y="812" width="16" height="17" fill="#4d4d4d"/><rect x="81" y="812" width="16" height="17" fill="#666"/><rect x="97" y="812" width="16" height="17" fill="#808080"/><rect x="113" y="812" width="16" height="17" fill="#999"/><rect x="129" y="812" width="16" height="17" fill="#b3b3b3"/><rect x="145" y="812" width="16" height="17" fill="#ccc"/><rect x="161" y="812" width="16" height="17" fill="#e6e6e6"/><rect x="177" y="812" width="16" height="17" fill="#ececec"/><rect x="193" y="812" width="16" height="17" fill="#f2f2f2"/><rect x="209" y="812" width="16" height="17" fill="#f9f9f9"/><rect x="225" y="812" width="16" height="17" fill="#fff"/>
<rect x="241" y="812" width="16" height="17" fill="#800000"/><rect x="257" y="812" width="16" height="17" fill="#f00"/><rect x="273" y="812" width="16" height="17" fill="#808000"/><rect x="289" y="812" width="16" height="17" fill="#ff0"/><rect x="305" y="812" width="16" height="17" fill="#008000"/><rect x="321" y="812" width="16" height="17" fill="#0f0"/><rect x="337" y="812" width="16" height="17" fill="#008080"/><rect x="353" y="812" width="16" height="17" fill="#0ff"/><rect x="369" y="812" width="16" height="17" fill="#000080"/><rect x="385" y="812" width="16" height="17" fill="#00f"/><rect x="401" y="812" width="16" height="17" fill="#800080"/><rect x="417" y="812" width="16" height="17" fill="#f0f"/>
<rect x="433" y="812" width="16" height="17" fill="#2b0000"/><rect x="449" y="812" width="16" height="17" fill="#500"/><rect x="465" y="812" width="16" height="17" fill="#800000"/><rect x="481" y="812" width="16" height="17" fill="#a00"/><rect x="497" y="812" width="16" height="17" fill="#d40000"/><rect x="513" y="812" width="16" height="17" fill="#f00"/><rect x="529" y="812" width="16" height="17" fill="#ff2a2a"/><rect x="545" y="812" width="16" height="17" fill="#f55"/><rect x="561" y="812" width="16" height="17" fill="#ff8080"/><rect x="577" y="812" width="16" height="17" fill="#faa"/><rect x="593" y="812" width="16" height="17" fill="#ffd5d5"/>
<rect x="609" y="812" width="16" height="17" fill="#280b0b"/><rect x="625" y="812" width="16" height="17" fill="#501616"/><rect x="641" y="812" width="16" height="17" fill="#782121"/><rect x="657" y="812" width="16" height="17" fill="#a02c2c"/><rect x="673" y="812" width="16" height="17" fill="#c83737"/><rect x="689" y="812" width="16" height="17" fill="#d35f5f"/><rect x="705" y="812" width="16" height="17" fill="#de8787"/><rect x="721" y="812" width="16" height="17" fill="#e9afaf"/><rect x="737" y="812" width="16" height="17" fill="#f4d7d7"/>
<rect x="753" y="812" width="16" height="17" fill="#241c1c"/><rect x="769" y="812" width="16" height="17" fill="#483737"/><rect x="785" y="812" width="16" height="17" fill="#6c5353"/><rect x="801" y="812" width="16" height="17" fill="#916f6f"/><rect x="817" y="812" width="16" height="17" fill="#ac9393"/><rect x="833" y="812" width="16" height="17" fill="#c8b7b7"/><rect x="849" y="812" width="16" height="17" fill="#e3dbdb"/>
<rect x="865" y="812" width="16" height="17" fill="#2b1100"/><rect x="881" y="812" width="16" height="17" fill="#520"/><rect x="897" y="812" width="16" height="17" fill="#803300"/><rect x="913" y="812" width="16" height="17" fill="#a40"/><rect x="929" y="812" width="16" height="17" fill="#d45500"/><rect x="945" y="812" width="16" height="17" fill="#f60"/><rect x="961" y="812" width="16" height="17" fill="#ff7f2a"/><rect x="977" y="812" width="16" height="17" fill="#f95"/><rect x="993" y="812" width="16" height="17" fill="#ffb380"/><rect x="1009" y="812" width="16" height="17" fill="#fca"/><rect x="1025" y="812" width="16" height="17" fill="#ffe6d5"/>
<rect x="1041" y="812" width="16" height="17" fill="#28170b"/><rect x="1057" y="812" width="16" height="17" fill="#502d16"/><rect x="1073" y="812" width="9" height="17" fill="#784421"/>
</g>
<path d="M1090 816V824L1085 820Z" fill="#555"/>
<rect x="0" y="826" width="169" height="3" fill="#f4794a"/>

<!-- status bar -->
<rect x="45" y="829" width="78" height="13" fill="#000"/>
<text x="2" y="839" style="font-size:11px" textLength="39">Relleno:</text>
<text x="2" y="852" style="font-size:11px" textLength="29">Trazo:</text>
<text x="72" y="852" style="font-size:11px;font-style:italic" textLength="25">None</text>
<text x="127" y="847" style="font-size:12px">O:</text>
<rect x="141.500" y="831.500" width="45" height="20" rx="3" class="box"/><text x="146" y="847" style="font-size:12px;fill:#3c3c3c">80</text><rect x="172" y="832" width="14" height="19" fill="#eae8e5"/><use href="#spin" x="179" y="842"/>
<path d="M190.500 830V854M944.500 830V854" stroke="#d5d3cf"/>
<g transform="translate(202,841)"><path d="M-6 0C-3 -4 3 -4 6 0C3 4 -3 4 -6 0Z" fill="#fff" stroke="#111" stroke-width="1.200"/><circle r="2.500" fill="#111"/><path d="M-5 -3L-6 -5M0 -4V-6M5 -3L6 -5" stroke="#111"/></g>
<g transform="translate(220,842)"><rect x="-4" y="-1" width="8" height="6" fill="#fc3" stroke="#222"/><path d="M-3 -1V-5H3" fill="none" stroke="#222"/></g>
<rect x="230.500" y="831.500" width="73" height="21" rx="4" class="btn"/>
<circle cx="239" cy="842" r="1.200" fill="#555"/>
<text x="242" y="846" style="font-size:11px;font-weight:bold;fill:#555">Capa 1</text><use href="#spin" x="293" y="842"/>
<text x="310" y="846" style="fill:#555"><tspan font-weight="bold">Trayecto</tspan> 4 nodes en capa <tspan font-weight="bold">Capa 1</tspan>. Pulse en la selección para conmutar los tiradores de escalado/rotación.</text>
<text x="947" y="839" style="font-size:11px">X:</text>
<text x="947" y="852" style="font-size:11px">Y:</text>
<text x="965" y="839" style="font-family:'Liberation Mono',monospace;font-size:11px" textLength="36">784,05</text>
<text x="965" y="852" style="font-family:'Liberation Mono',monospace;font-size:11px" textLength="36">664,45</text>
<text x="1008" y="846" style="font-size:12px">Z:</text>
<rect x="1020.500" y="832.500" width="55" height="20" rx="3" class="box"/><text x="1029" y="847" style="font-size:12px;fill:#3c3c3c">75%</text><rect x="1061" y="833" width="14" height="19" fill="#eae8e5"/><use href="#spin" x="1068" y="843"/>
<path d="M1086 852H1093M1089 848H1093M1092 844V846" stroke="#bbb" stroke-dasharray="1 1"/>
</svg>
</body></html>
